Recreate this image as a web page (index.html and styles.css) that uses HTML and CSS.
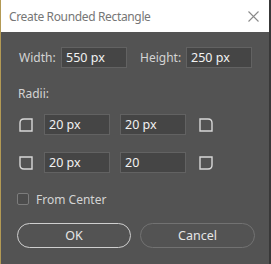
FILE: index.html
```html
<!DOCTYPE html>
<html>
<head>
<meta charset="utf-8">
<link rel="stylesheet" href="styles.css">
</head>
<body>
<div class="screen">
  <div class="window">
    <div class="titlebar">
      <span class="title">Create Rounded Rectangle</span>
      <svg class="close" width="11" height="11" viewBox="0 0 11 11"><path d="M0.5 0.5 L10.5 10.5 M10.5 0.5 L0.5 10.5" stroke="#8a8a8a" stroke-width="1.1" fill="none"/></svg>
    </div>
    <div class="body">
      <div class="size-row">
        <span class="label lbl-w">Width:</span>
        <div class="input">550 px</div>
        <span class="label lbl-h">Height:</span>
        <div class="input">250 px</div>
      </div>
      <div class="radii-label">Radii:</div>
      <div class="corner-row">
        <svg class="corner" width="14" height="14" viewBox="0 0 14 14"><path d="M1 13 V5 Q1 1 5 1 H13 V13 Z" fill="none" stroke="#d8d8d8" stroke-width="1.4"/></svg>
        <div class="input">20 px</div>
        <div class="input in2">20 px</div>
        <svg class="corner c-right" width="14" height="14" viewBox="0 0 14 14"><path d="M1 1 H9 Q13 1 13 5 V13 H1 Z" fill="none" stroke="#d8d8d8" stroke-width="1.4"/></svg>
      </div>
      <div class="corner-row row2">
        <svg class="corner" width="14" height="14" viewBox="0 0 14 14"><path d="M1 1 V9 Q1 13 5 13 H13 V1 Z" fill="none" stroke="#d8d8d8" stroke-width="1.4"/></svg>
        <div class="input">20 px</div>
        <div class="input in2">20</div>
        <svg class="corner c-right" width="14" height="14" viewBox="0 0 14 14"><path d="M1 1 H13 V9 Q13 13 9 13 H1 Z" fill="none" stroke="#d8d8d8" stroke-width="1.4"/></svg>
      </div>
      <div class="check-row">
        <span class="checkbox"></span>
        <span class="label">From Center</span>
      </div>
      <div class="buttons">
        <div class="btn btn-ok">OK</div>
        <div class="btn btn-cancel">Cancel</div>
      </div>
    </div>
  </div>
  <div class="edge"></div>
</div>
</body>
</html>
```
FILE: styles.css
```css
html, body {
  margin: 0;
  padding: 0;
}
body {
  width: 271px;
  height: 264px;
  overflow: hidden;
  font-family: "Noto Sans", "Open Sans", sans-serif;
  font-size: 12px;
}
.screen {
  display: flex;
  width: 271px;
  height: 264px;
  border-left: 1px solid #b39a55;
  box-sizing: border-box;
  background: linear-gradient(#cbb97f, #7d6632);
}
.window {
  flex: 1;
  display: flex;
  flex-direction: column;
}
.edge {
  width: 3px;
  background: #383838;
}
.titlebar {
  height: 32px;
  background: #ffffff;
  display: flex;
  align-items: center;
  justify-content: space-between;
  padding: 0 10px 0 8px;
}
.title {
  color: #767676;
  font-size: 12px;
  letter-spacing: -0.35px;
}
.close {
  display: block;
}
.body {
  flex: 1;
  background: #535353;
  padding: 15px 14px 0 15px;
  color: #d6d6d6;
}
.label {
  color: #d4d4d4;
}
.size-row {
  display: flex;
  align-items: center;
  height: 21px;
}
.lbl-w {
  width: 45px;
  padding-left: 3px;
  box-sizing: border-box;
}
.lbl-h {
  width: 46px;
  margin-left: 13px;
}
.input {
  width: 66px;
  height: 21px;
  box-sizing: border-box;
  background: #454545;
  border: 1px solid #626262;
  color: #f2f2f2;
  padding-left: 4px;
  line-height: 19px;
  font-size: 12.5px;
}
.radii-label {
  margin-top: 17px;
  padding-left: 2px;
  height: 18px;
  line-height: 18px;
  color: #d4d4d4;
}
.corner-row {
  display: flex;
  align-items: center;
  height: 21px;
  margin-top: 11px;
}
.row2 {
  margin-top: 17px;
}
.corner {
  display: block;
  margin-left: 3px;
  margin-right: 11px;
}
.in2 {
  margin-left: 10px;
}
.c-right {
  margin-left: 13px;
  margin-right: 0;
}
.check-row {
  display: flex;
  align-items: center;
  height: 16px;
  margin-top: 18px;
  gap: 7px;
}
.checkbox {
  width: 12px;
  height: 12px;
  box-sizing: border-box;
  border: 1px solid #7c7c7c;
  border-radius: 2px;
  background: #4c4c4c;
  margin-left: 1px;
}
.buttons {
  display: flex;
  gap: 9px;
  margin-top: 16px;
  padding-left: 1px;
}
.btn {
  width: 114px;
  height: 25px;
  box-sizing: border-box;
  border-radius: 13px;
  display: flex;
  align-items: center;
  justify-content: center;
  color: #e6e6e6;
  font-size: 12.5px;
}
.btn-ok {
  border: 1.5px solid #cfcfcf;
}
.btn-cancel {
  border: 1px solid #727272;
  width: 115px;
}
```
